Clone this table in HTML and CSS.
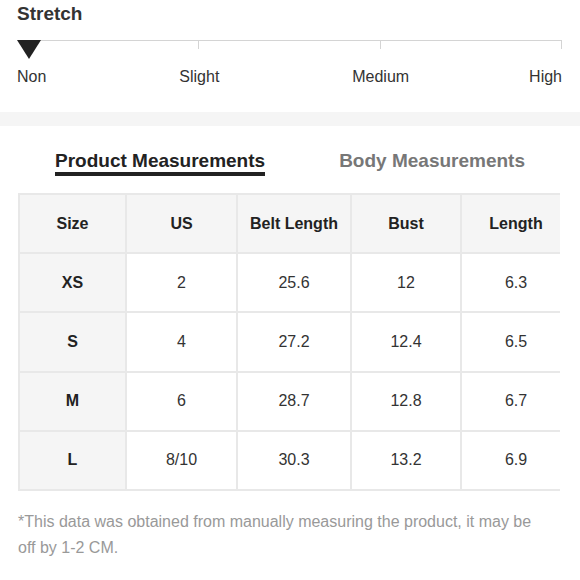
FILE: index.html
```html
<!DOCTYPE html>
<html lang="en">
<head>
<meta charset="utf-8">
<link rel="stylesheet" href="styles.css">
</head>
<body>
<section class="stretch">
  <h2 class="stretch-title">Stretch</h2>
  <div class="track">
    <div class="seg"></div>
    <div class="seg"></div>
    <div class="seg"></div>
    <span class="marker"></span>
  </div>
  <div class="labels">
    <span class="lbl lbl-non">Non</span>
    <span class="lbl lbl-slight">Slight</span>
    <span class="lbl lbl-medium">Medium</span>
    <span class="lbl lbl-high">High</span>
  </div>
</section>
<div class="band"></div>
<section class="measure">
  <div class="tabs">
    <span class="tab tab-active">Product Measurements</span>
    <span class="tab">Body Measurements</span>
  </div>
  <div class="table-wrap">
    <table class="size-table">
      <colgroup>
        <col class="c1"><col class="c2"><col class="c3"><col class="c4"><col class="c5">
      </colgroup>
      <thead>
        <tr><th>Size</th><th>US</th><th>Belt Length</th><th>Bust</th><th>Length</th></tr>
      </thead>
      <tbody>
        <tr><th>XS</th><td>2</td><td>25.6</td><td>12</td><td>6.3</td></tr>
        <tr><th>S</th><td>4</td><td>27.2</td><td>12.4</td><td>6.5</td></tr>
        <tr><th>M</th><td>6</td><td>28.7</td><td>12.8</td><td>6.7</td></tr>
        <tr><th>L</th><td>8/10</td><td>30.3</td><td>13.2</td><td>6.9</td></tr>
      </tbody>
    </table>
  </div>
  <p class="note">*This data was obtained from manually measuring the product, it may be off by 1-2 CM.</p>
</section>
</body>
</html>
```
FILE: styles.css
```css
html, body {
  margin: 0;
  padding: 0;
  background: #fff;
  font-family: "Liberation Sans", Arial, sans-serif;
  color: #333;
}

.stretch {
  padding: 2px 18px 25px 18px;
}

.stretch-title {
  margin: 0 0 0 -1px;
  font-size: 19px;
  line-height: 24px;
  font-weight: bold;
  color: #333;
}

.track {
  position: relative;
  margin-top: 14px;
  display: grid;
  grid-template-columns: 1fr 1fr 1fr;
  height: 9px;
}

.seg {
  border-top: 1px solid #d4d4d4;
  border-right: 1px solid #d4d4d4;
}

.marker {
  position: absolute;
  left: -1px;
  top: 0;
  width: 0;
  height: 0;
  border-left: 12px solid transparent;
  border-right: 12px solid transparent;
  border-top: 19px solid #222;
}

.labels {
  margin-top: 18px;
  display: grid;
  grid-template-columns: repeat(6, 1fr);
  font-size: 16px;
  line-height: 20px;
  color: #333;
}

.lbl-non { grid-column: 1; margin-left: -1px; }
.lbl-slight { grid-column: 2 / 4; text-align: center; }
.lbl-medium { grid-column: 4 / 6; text-align: center; }
.lbl-high { grid-column: 6; text-align: right; }

.band {
  height: 14px;
  background: #f5f5f5;
}

.measure {
  padding: 24px 18px 20px 18px;
}

.tabs {
  display: flex;
  justify-content: space-around;
}

.tab {
  font-size: 19px;
  line-height: 22px;
  font-weight: bold;
  color: #777;
  border-bottom: 4px solid transparent;
}

.tab-active {
  color: #222;
  border-bottom-color: #222;
}

.table-wrap {
  margin-top: 17px;
  width: 542px;
  overflow: hidden;
}

.size-table {
  width: 552px;
  border-collapse: collapse;
  table-layout: fixed;
  font-size: 16px;
}

.c1 { width: 107px; }
.c2 { width: 111px; }
.c3 { width: 114px; }
.c4 { width: 110px; }
.c5 { width: 110px; }

.size-table th,
.size-table td {
  border: 2px solid #e8e8e8;
  height: 57.2px;
  padding: 0;
  text-align: center;
  vertical-align: middle;
}

.size-table th {
  font-weight: bold;
  color: #222;
  background: #f5f5f5;
}

.size-table td {
  color: #333;
  background: #fff;
}

.note {
  margin: 18px 0 0 0;
  max-width: 530px;
  font-size: 16px;
  line-height: 26px;
  color: #999;
}
```
